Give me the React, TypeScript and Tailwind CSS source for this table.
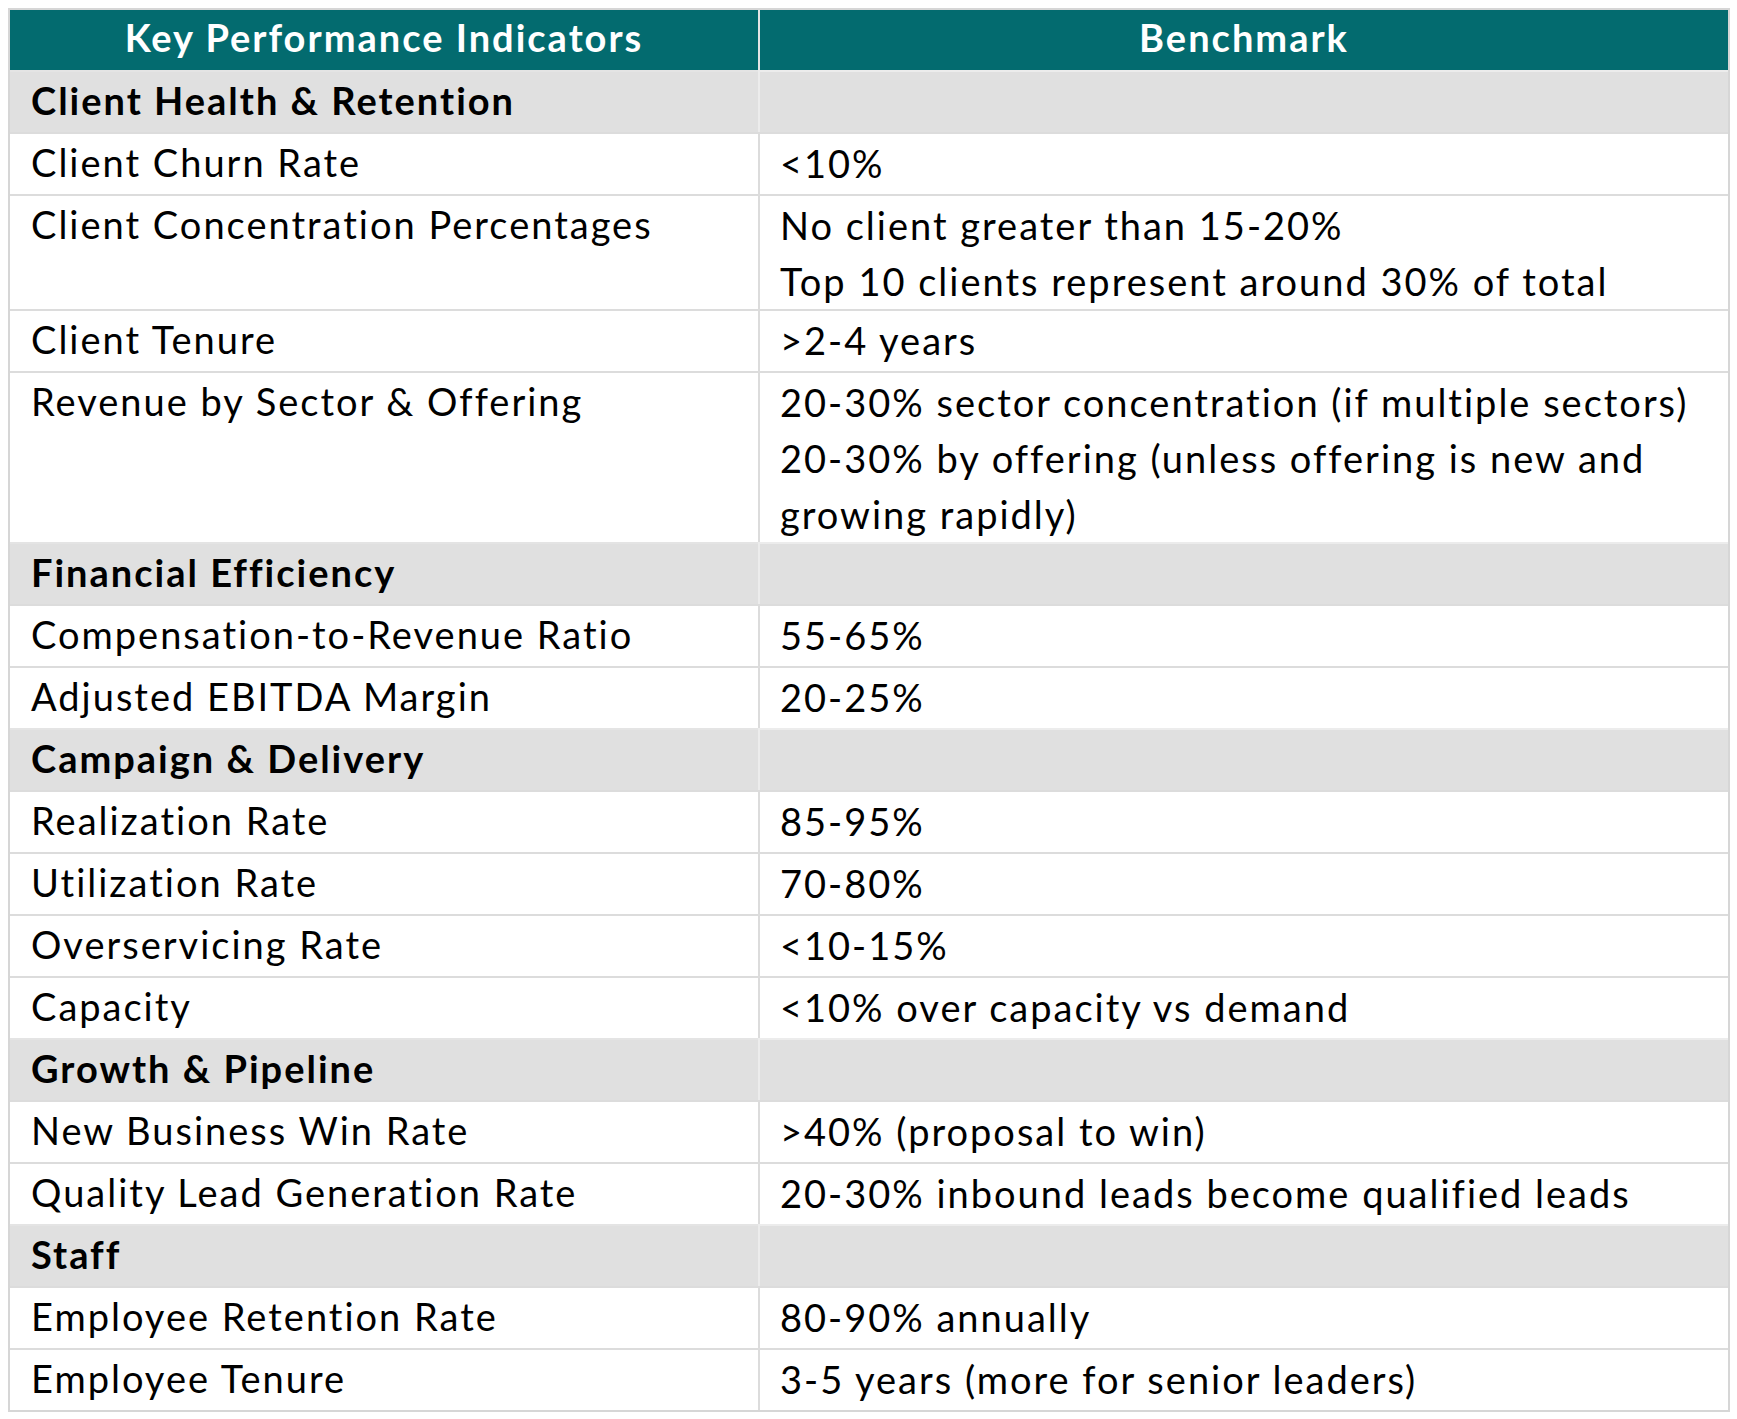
import React from "react"

type Row =
  | { kind: "section"; title: string }
  | { kind: "item"; kpi: string; bench: string[] }

const rows: Row[] = [
  { kind: "section", title: "Client Health & Retention" },
  { kind: "item", kpi: "Client Churn Rate", bench: ["<10%"] },
  {
    kind: "item",
    kpi: "Client Concentration Percentages",
    bench: ["No client greater than 15-20%", "Top 10 clients represent around 30% of total"],
  },
  { kind: "item", kpi: "Client Tenure", bench: [">2-4 years"] },
  {
    kind: "item",
    kpi: "Revenue by Sector & Offering",
    bench: [
      "20-30% sector concentration (if multiple sectors)",
      "20-30% by offering (unless offering is new and growing rapidly)",
    ],
  },
  { kind: "section", title: "Financial Efficiency" },
  { kind: "item", kpi: "Compensation-to-Revenue Ratio", bench: ["55-65%"] },
  { kind: "item", kpi: "Adjusted EBITDA Margin", bench: ["20-25%"] },
  { kind: "section", title: "Campaign & Delivery" },
  { kind: "item", kpi: "Realization Rate", bench: ["85-95%"] },
  { kind: "item", kpi: "Utilization Rate", bench: ["70-80%"] },
  { kind: "item", kpi: "Overservicing Rate", bench: ["<10-15%"] },
  { kind: "item", kpi: "Capacity", bench: ["<10% over capacity vs demand"] },
  { kind: "section", title: "Growth & Pipeline" },
  { kind: "item", kpi: "New Business Win Rate", bench: [">40% (proposal to win)"] },
  { kind: "item", kpi: "Quality Lead Generation Rate", bench: ["20-30% inbound leads become qualified leads"] },
  { kind: "section", title: "Staff" },
  { kind: "item", kpi: "Employee Retention Rate", bench: ["80-90% annually"] },
  { kind: "item", kpi: "Employee Tenure", bench: ["3-5 years (more for senior leaders)"] },
]

export default function App() {
  return (
    <div className="min-h-screen bg-white p-2 font-['Lato','Noto_Sans',sans-serif] text-[38px] tracking-[2px] text-black">
      <div className="grid w-[1722px] grid-cols-[748px_1fr] border-2 border-[#d6d6d6]">
        <div className="flex h-[60px] items-center justify-center bg-[#036b6f] pb-[6px] font-bold text-white">
          Key Performance Indicators
        </div>
        <div className="flex h-[60px] items-center justify-center border-l-2 border-[#e4e4e4] bg-[#036b6f] pb-[6px] font-bold text-white">
          Benchmark
        </div>
        {rows.map((row, i) =>
          row.kind === "section" ? (
            <React.Fragment key={i}>
              <div className="min-h-[62px] border-t-2 border-[#e4e4e4] bg-[#e0e0e0] px-[21px] font-bold leading-[56px]">
                {row.title}
              </div>
              <div className="min-h-[62px] border-l-2 border-t-2 border-[#ececec] bg-[#e0e0e0]" />
            </React.Fragment>
          ) : (
            <React.Fragment key={i}>
              <div className="min-h-[62px] border-t-2 border-[#dcdcdc] bg-white px-[21px] leading-[56px]">
                {row.kpi}
              </div>
              <div className="min-h-[62px] border-l-2 border-t-2 border-[#dcdcdc] bg-white px-[20px] pt-[1px] leading-[56px]">
                {row.bench.map((b, j) => (
                  <div key={j}>{b}</div>
                ))}
              </div>
            </React.Fragment>
          )
        )}
      </div>
    </div>
  )
}
